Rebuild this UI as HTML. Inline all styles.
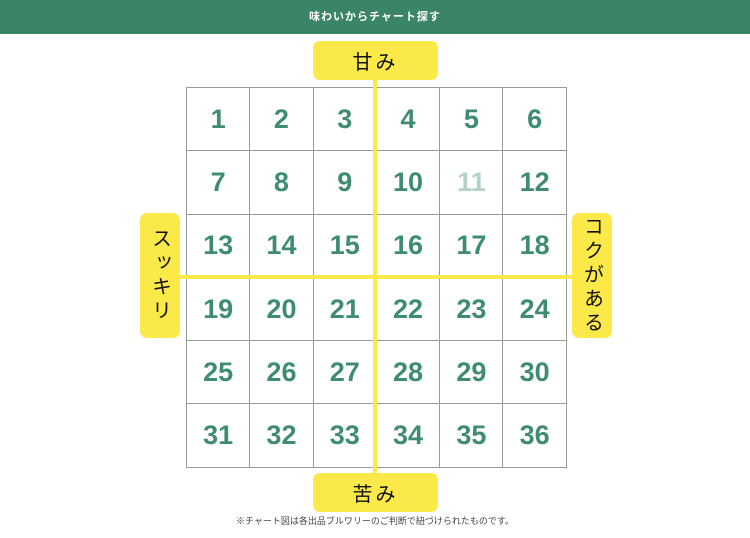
<!DOCTYPE html>
<html><head><meta charset="utf-8"><style>
*{margin:0;padding:0;box-sizing:border-box}
body{width:750px;height:538px;background:#fff;position:relative;overflow:hidden;font-family:"Liberation Sans","Noto Sans CJK JP",sans-serif}
.hd{position:absolute;left:0;top:0;width:750px;height:34px;background:#3a8467;color:#fff;font-size:11px;font-weight:bold;text-align:center;line-height:34px;letter-spacing:1px}
table{position:absolute;left:186px;top:87px;border-collapse:collapse}
td{width:63.3px;height:63.3px;border:1.5px solid #999;text-align:center;vertical-align:middle;color:#3f8d71;font-size:27px;font-weight:bold;padding:0}
td.l{color:#b3d2c5}
.vl{position:absolute;left:373px;top:80px;width:4px;height:394px;background:#fbe94a}
.hl{position:absolute;left:180px;top:275px;width:392px;height:4px;background:#fbe94a}
.lb{position:absolute;background:#fbe94a;border-radius:7px;color:#111;font-size:20px;display:flex;align-items:center;justify-content:center}
.h{width:125px;height:39px;left:313px;letter-spacing:3px}
.v{width:40px;height:125px;top:213px;writing-mode:vertical-rl;letter-spacing:4px}
.ft{position:absolute;left:0;width:750px;top:514px;text-align:center;font-size:9px;color:#444}
</style></head><body>
<div class="hd">味わいからチャート探す</div>
<table>
<tr><td>1</td><td>2</td><td>3</td><td>4</td><td>5</td><td>6</td></tr>
<tr><td>7</td><td>8</td><td>9</td><td>10</td><td class="l">11</td><td>12</td></tr>
<tr><td>13</td><td>14</td><td>15</td><td>16</td><td>17</td><td>18</td></tr>
<tr><td>19</td><td>20</td><td>21</td><td>22</td><td>23</td><td>24</td></tr>
<tr><td>25</td><td>26</td><td>27</td><td>28</td><td>29</td><td>30</td></tr>
<tr><td>31</td><td>32</td><td>33</td><td>34</td><td>35</td><td>36</td></tr>
</table>
<div class="vl"></div><div class="hl"></div>
<div class="lb h" style="top:41px">甘み</div>
<div class="lb h" style="top:473px">苦み</div>
<div class="lb v" style="left:140px">スッキリ</div>
<div class="lb v" style="left:572px">コクがある</div>
<div class="ft">※チャート図は各出品ブルワリーのご判断で紐づけられたものです。</div>
</body></html>
